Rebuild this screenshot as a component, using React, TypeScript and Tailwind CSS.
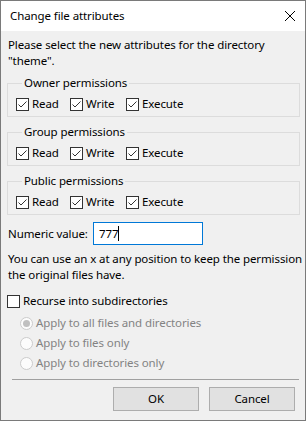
import React from 'react'

const font = { fontFamily: '"Noto Sans", "Segoe UI", sans-serif' }

function CheckMark() {
  return (
    <svg viewBox="0 0 13 13" className="w-[13px] h-[13px] block shrink-0">
      <rect x="0.5" y="0.5" width="12" height="12" fill="#ffffff" stroke="#333333" />
      <path d="M2.5 6.5 L5 9 L10.5 3.5" fill="none" stroke="#333333" strokeWidth="1" />
    </svg>
  )
}

function Check({ label, checked = true }: { label: string; checked?: boolean }) {
  return (
    <label className="flex items-center h-4">
      {checked ? (
        <CheckMark />
      ) : (
        <span className="block shrink-0 w-[13px] h-[13px] border border-[#333333] bg-white" />
      )}
      <span className="ml-[3px] leading-4 whitespace-nowrap">{label}</span>
    </label>
  )
}

function Radio({ label, selected = false }: { label: string; selected?: boolean }) {
  return (
    <div className="flex items-center h-5 pl-[19px] text-[#838383]">
      <span className="w-[13px] h-[13px] rounded-full border border-[#cccccc] bg-[#fcfcfc] flex items-center justify-center">
        {selected && <span className="w-[7px] h-[7px] rounded-full bg-[#c0c0c0]" />}
      </span>
      <span className="ml-[3px] leading-4">{label}</span>
    </div>
  )
}

function PermGroup({ title, className = '' }: { title: string; className?: string }) {
  return (
    <fieldset className={`border border-[#dcdcdc] ml-[6px] w-[293px] pl-[8px] pb-[4px] ${className}`}>
      <legend className="ml-[6px] px-[2px] leading-4">{title}</legend>
      <div className="flex pt-[5px]">
        <div className="w-[54px]"><Check label="Read" /></div>
        <div className="w-[56px]"><Check label="Write" /></div>
        <Check label="Execute" />
      </div>
    </fieldset>
  )
}

export default function App() {
  return (
    <div className="w-[308px] h-[422px] bg-white text-[11.5px] tracking-[-0.1px] text-black" style={font}>
      <div className="w-[306px] h-[421px] border border-[#7a7a7a] bg-[#f0f0f0] flex flex-col">
        {/* Title bar */}
        <div className="h-[30px] bg-white flex items-center justify-between pl-[9px] pr-[10px]">
          <span className="leading-4">Change file attributes</span>
          <svg viewBox="0 0 10 10" className="w-[10px] h-[10px]">
            <path d="M0 0 L10 10 M10 0 L0 10" stroke="#000000" strokeWidth="1" />
          </svg>
        </div>

        <div className="flex flex-col pt-[6px]">
          <p className="pl-[7px] leading-4 whitespace-nowrap">
            Please select the new attributes for the directory
            <br />
            "theme".
          </p>

          <PermGroup title="Owner permissions" className="mt-[6px]" />
          <PermGroup title="Group permissions" className="mt-[7px]" />
          <PermGroup title="Public permissions" className="mt-[7px]" />

          <div className="flex items-center mt-[7px] pl-[7px]">
            <span className="w-[85px] leading-4">Numeric value:</span>
            <div className="w-[110px] h-[23px] border border-[#0078d7] bg-white flex items-center pl-[5px]">
              <span className="leading-4">777</span>
              <span className="w-px h-[15px] bg-black" />
            </div>
          </div>

          <p className="pl-[7px] mt-[6px] leading-4 whitespace-nowrap">
            You can use an x at any position to keep the permission
            <br />
            the original files have.
          </p>

          <div className="pl-[6px] mt-[10px]">
            <Check label="Recurse into subdirectories" checked={false} />
          </div>

          <div className="flex flex-col mt-[4px]">
            <Radio label="Apply to all files and directories" selected />
            <Radio label="Apply to files only" />
            <Radio label="Apply to directories only" />
          </div>

          <div className="mt-[6px] ml-[11px] w-[287px] h-px bg-[#a0a0a0]" />

          <div className="flex justify-end gap-[10px] pr-[10px] mt-[7px]">
            <button className="w-[86px] h-[24px] bg-[#e1e1e1] border border-[#adadad] leading-4">OK</button>
            <button className="w-[86px] h-[24px] bg-[#e1e1e1] border border-[#adadad] leading-4">Cancel</button>
          </div>
        </div>
      </div>
    </div>
  )
}
